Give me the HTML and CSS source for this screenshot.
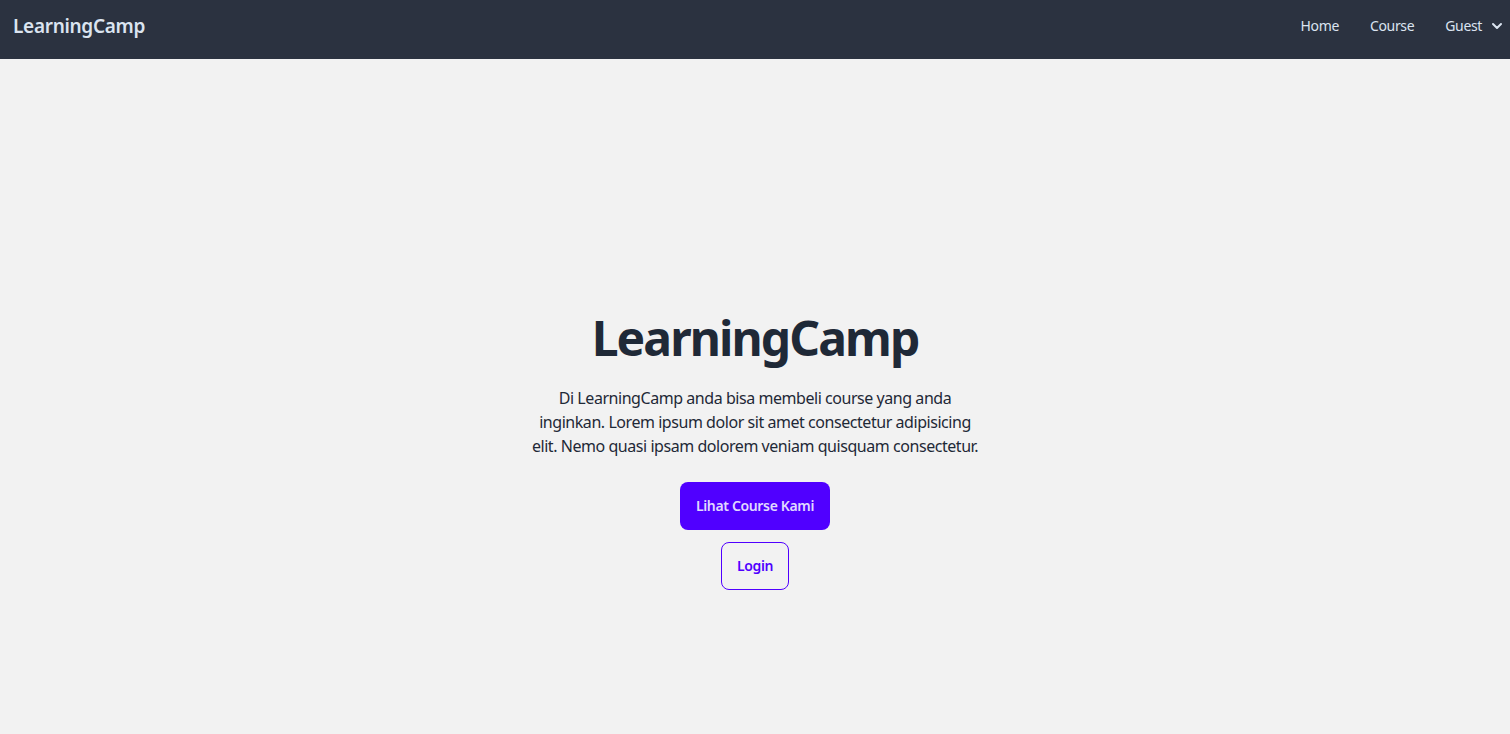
FILE: index.html
```html
<!DOCTYPE html>
<html lang="id">
<head>
<meta charset="utf-8">
<title>LearningCamp</title>
<link rel="stylesheet" href="styles.css">
</head>
<body>
<nav class="navbar">
  <a class="brand" href="#">LearningCamp</a>
  <ul class="menu">
    <li><a href="#">Home</a></li>
    <li><a href="#">Course</a></li>
    <li><a href="#" class="dropdown">Guest
      <svg width="12" height="12" viewBox="0 0 24 24" fill="none" stroke="currentColor" stroke-width="4" stroke-linecap="round" stroke-linejoin="round"><path d="M4 8l8 8 8-8"/></svg></a></li>
  </ul>
</nav>
<section class="hero">
  <div class="hero-content">
    <h1 class="title">LearningCamp</h1>
    <p class="lead">Di LearningCamp anda bisa membeli course yang anda inginkan. Lorem ipsum dolor sit amet consectetur adipisicing elit. Nemo quasi ipsam dolorem veniam quisquam consectetur.</p>
    <div class="actions">
      <a href="#" class="btn btn-primary">Lihat Course Kami</a>
      <a href="#" class="btn btn-outline">Login</a>
    </div>
  </div>
</section>
</body>
</html>
```
FILE: styles.css
```css
* { box-sizing: border-box; }
html, body { margin: 0; padding: 0; }
body {
  font-family: "Noto Sans", "Open Sans", sans-serif;
  background: #f2f2f2;
  color: #1f2937;
  overflow: hidden;
}
a { text-decoration: none; color: inherit; }
.navbar {
  height: 59px;
  background: #2b3240;
  color: #dbe4f0;
  display: flex;
  align-items: center;
  justify-content: space-between;
  padding: 0 7px 8px 13px;
}
.brand {
  font-size: 19px;
  font-weight: 600;
  letter-spacing: -0.3px;
}
.menu {
  list-style: none;
  margin: 0;
  padding: 0;
  display: flex;
  align-items: center;
  gap: 31px;
  font-size: 14px;
  letter-spacing: -0.35px;
}
.menu a { display: flex; align-items: center; gap: 9px; }
.dropdown svg { margin-top: 1px; }
.hero {
  height: 675px;
  padding-top: 110px;
  display: flex;
  align-items: center;
  justify-content: center;
  text-align: center;
}
.hero-content { max-width: 448px; }
.title {
  margin: 0;
  font-size: 48px;
  line-height: 48px;
  font-weight: 700;
  color: #1f2937;
  letter-spacing: -1.9px;
}
.lead {
  margin: 24px 0;
  font-size: 16px;
  line-height: 24px;
  color: #1f2937;
  letter-spacing: -0.45px;
}
.actions {
  display: flex;
  flex-direction: column;
  align-items: center;
  gap: 12px;
}
.btn {
  height: 48px;
  padding: 0 16px;
  border-radius: 8px;
  font-size: 14px;
  font-weight: 600;
  letter-spacing: -0.35px;
  display: inline-flex;
  align-items: center;
  justify-content: center;
}
.btn-primary { background: #5000ff; color: #e0d9ff; }
.btn-outline { border: 1px solid #5000ff; color: #5000ff; padding: 0 15px; }
```
